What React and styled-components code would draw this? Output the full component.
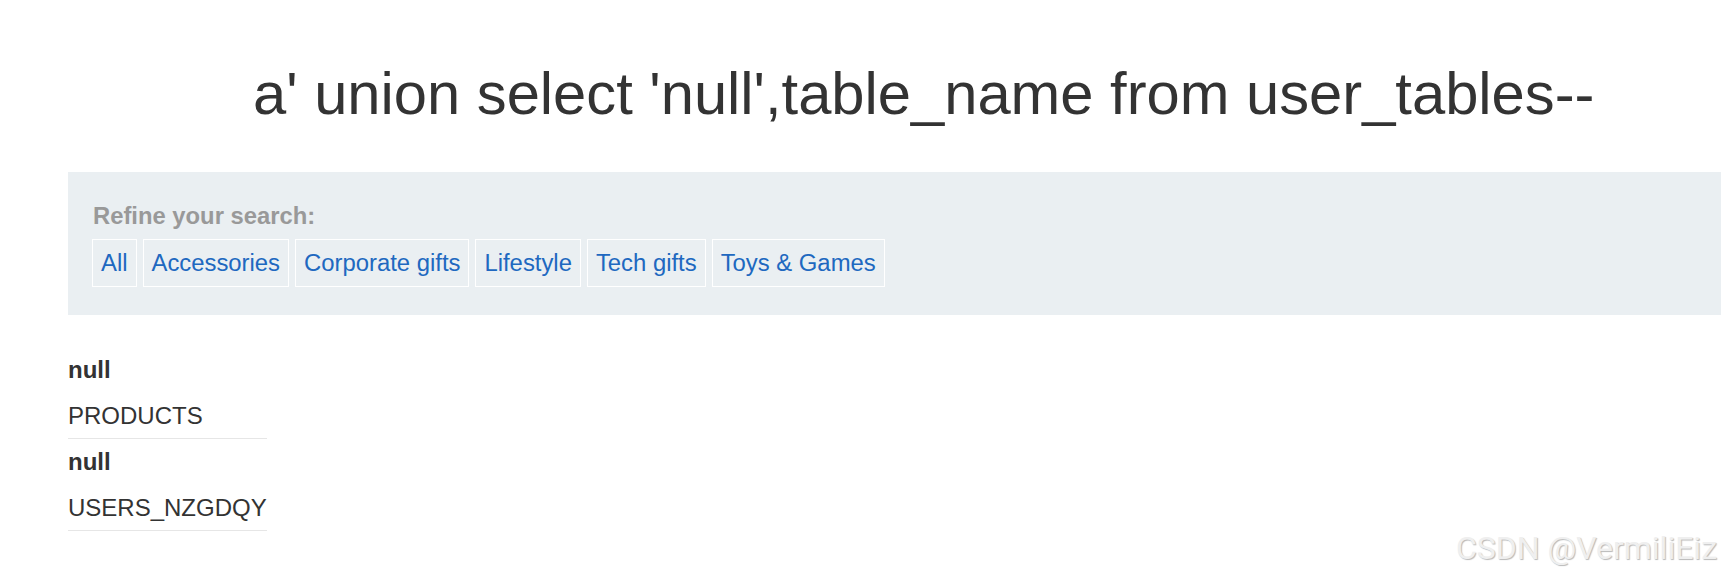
import styled, { createGlobalStyle } from 'styled-components';

const GlobalStyle = createGlobalStyle`
  html, body {
    margin: 0;
    padding: 0;
    background: #fff;
    overflow: hidden;
  }
  body {
    font-family: 'Liberation Sans', Arial, sans-serif;
    color: #333;
  }
`;

const Page = styled.div`
  position: relative;
  min-height: 577px;
  padding-left: 68px;
  box-sizing: border-box;
`;

const Title = styled.h1`
  margin: 0;
  padding: 58px 0 0 185px;
  font-size: 59.7px;
  font-weight: 400;
  line-height: 72px;
  color: #333;
  white-space: nowrap;
`;

const Filters = styled.section`
  margin-top: 42px;
  background: #eaeff2;
  padding: 30px 25px 28px 24px;
`;

const FilterLabel = styled.div`
  font-size: 23.8px;
  font-weight: 700;
  line-height: 28px;
  color: #999;
  margin: 0 0 9px 1px;
`;

const FilterRow = styled.div`
  display: flex;
  gap: 6px;
`;

const FilterLink = styled.a`
  display: block;
  padding: 9px 8px;
  border: 1px solid #fff;
  font-size: 23.85px;
  line-height: 28px;
  color: #2068c0;
  text-decoration: none;
  cursor: pointer;
  white-space: nowrap;
`;

const Results = styled.table`
  margin-top: 32px;
  border-collapse: collapse;
  width: 199px;
`;

const HeadCell = styled.th`
  text-align: left;
  font-size: 24px;
  font-weight: 700;
  line-height: 28px;
  padding: 9px 0;
  color: #333;
`;

const Cell = styled.td`
  font-size: 24px;
  line-height: 28px;
  padding: 9px 0 8px;
  border-bottom: 1px solid #e6e6e6;
  color: #333;
`;

const Watermark = styled.div`
  position: absolute;
  right: 4px;
  bottom: 10px;
  font-family: Roboto, 'Liberation Sans', sans-serif;
  font-size: 32px;
  line-height: 38px;
  color: #efefef;
  text-shadow: 1px 1px 1px rgba(0, 0, 0, 0.28);
  white-space: nowrap;
`;

const categories = ['All', 'Accessories', 'Corporate gifts', 'Lifestyle', 'Tech gifts', 'Toys & Games'];

const rows = [
  { head: 'null', value: 'PRODUCTS' },
  { head: 'null', value: 'USERS_NZGDQY' },
];

function RowGroup({ head, value }) {
  return (
    <>
      <tr>
        <HeadCell>{head}</HeadCell>
      </tr>
      <tr>
        <Cell>{value}</Cell>
      </tr>
    </>
  );
}

export default function App() {
  return (
    <>
      <GlobalStyle />
      <Page>
        <Title>a' union select 'null',table_name from user_tables--</Title>
        <Filters>
          <FilterLabel>Refine your search:</FilterLabel>
          <FilterRow>
            {categories.map((c) => (
              <FilterLink key={c}>{c}</FilterLink>
            ))}
          </FilterRow>
        </Filters>
        <Results>
          <tbody>
            {rows.map((r, i) => (
              <RowGroup key={i} head={r.head} value={r.value} />
            ))}
          </tbody>
        </Results>
        <Watermark>CSDN @VermiliEiz</Watermark>
      </Page>
    </>
  );
}
